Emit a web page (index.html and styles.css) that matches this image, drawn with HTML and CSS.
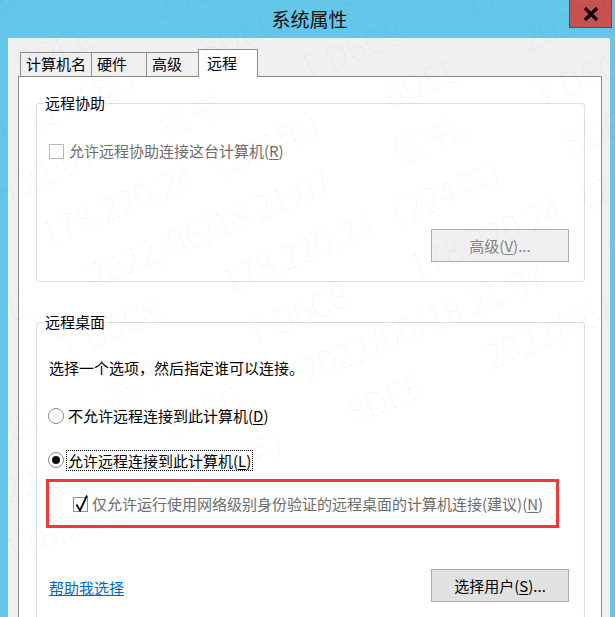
FILE: index.html
```html
<!DOCTYPE html>
<html lang="zh-CN">
<head>
<meta charset="utf-8">
<title>系统属性</title>
<link rel="stylesheet" href="styles.css">
</head>
<body>
<div class="window">
  <div class="titlebar">
    <span class="title">系统属性</span>
    <button class="close" aria-label="关闭">
      <svg width="16" height="14" viewBox="0 0 16 14"><path d="M2 1 L14 13 M14 1 L2 13" stroke="#000" stroke-width="3.2" fill="none"/></svg>
    </button>
  </div>
  <div class="frame">
    <div class="tabs">
      <div class="tab t1">计算机名</div>
      <div class="tab t2">硬件</div>
      <div class="tab t3">高级</div>
      <div class="tab active">远程</div>
    </div>
    <div class="panel">
      <fieldset class="group g1">
        <legend>远程协助</legend>
        <label class="check disabled"><span class="box"></span><span>允许远程协助连接这台计算机(<u>R</u>)</span></label>
        <div class="btnrow"><button class="btn" disabled>高级(<u>V</u>)...</button></div>
      </fieldset>
      <fieldset class="group g2">
        <legend>远程桌面</legend>
        <p class="intro">选择一个选项，然后指定谁可以连接。</p>
        <label class="radio r1"><span class="circle"></span><span>不允许远程连接到此计算机(<u>D</u>)</span></label>
        <label class="radio r2"><span class="circle on"></span><span class="focus">允许远程连接到此计算机(<u>L</u>)</span></label>
        <div class="highlight">
          <label class="check nla"><span class="box checked"><svg width="15" height="17" viewBox="0 0 15 17"><path d="M2.5 9.5 L6 15.5 L13 0.5" stroke="#000" stroke-width="1.8" fill="none"/></svg></span><span>仅允许运行使用网络级别身份验证的远程桌面的计算机连接(建议)(<u>N</u>)</span></label>
        </div>
        <div class="bottomrow">
          <a class="link" href="#">帮助我选择</a>
          <button class="btn enabled">选择用户(<u>S</u>)...</button>
        </div>
      </fieldset>
    </div>
  </div>
  <div class="watermark" aria-hidden="true">
    <div class="wm-inner">
      <p>2022/06/18 21:07　　信书。　　T D6C8　　178.220.24（224年）　　8DEE</p>
      <p>178.220.24（224年）　　8DEE　　2022/06/18 21:07　　信书。　　T D6C8</p>
      <p>T D6C8　　178.220.24（224年）　　8DEE　　2022/06/18 21:07　　信书。</p>
      <p>8DEE　　2022/06/18 21:07　　信书。　　T D6C8　　178.220.24（224年）</p>
      <p>信书。　　T D6C8　　178.220.24（224年）　　8DEE　　2022/06/18 21:07</p>
      <p>（224年）　　8DEE　　2022/06/18 21:07　　信书。　　T D6C8　　178.220.24</p>
      <p>21:07　　信书。　　T D6C8　　178.220.24（224年）　　8DEE　　2022/06/18</p>
      <p>2022/06/18 21:07　　信书。　　T D6C8　　178.220.24（224年）　　8DEE</p>
      <p>178.220.24（224年）　　8DEE　　2022/06/18 21:07　　信书。　　T D6C8</p>
      <p>T D6C8　　178.220.24（224年）　　8DEE　　2022/06/18 21:07　　信书。</p>
    </div>
  </div>
</div>
</body>
</html>
```

FILE: styles.css
```css
* { box-sizing: border-box; }

html, body {
  margin: 0;
  padding: 0;
  width: 615px;
  height: 617px;
  overflow: hidden;
}

body {
  font-family: "Noto Sans CJK SC", "Microsoft YaHei", "Noto Sans", sans-serif;
  font-size: 15px;
  line-height: 20px;
  color: #000;
}

.window {
  position: relative;
  width: 615px;
  height: 617px;
  background: #63c7e9;
  display: flex;
  flex-direction: column;
  overflow: hidden;
}

.titlebar {
  height: 38px;
  flex: none;
  display: flex;
  justify-content: center;
  align-items: center;
}

.title {
  font-size: 19px;
  line-height: 24px;
  color: #111;
  margin-left: 4px;
}

.close {
  position: absolute;
  top: 0;
  right: 3px;
  width: 43px;
  height: 28px;
  padding: 0;
  margin: 0;
  background: #c75050;
  border: 1px solid #8c3b3b;
  border-top: none;
  display: flex;
  align-items: center;
  justify-content: center;
}

.frame {
  flex: 1;
  margin: 0 5px 0 8px;
  background: #f0f0f0;
  padding: 11px 8px 0 10px;
  display: flex;
  flex-direction: column;
  min-height: 0;
}

.tabs {
  display: flex;
  align-items: flex-end;
  padding-left: 2px;
  position: relative;
  z-index: 2;
}

.tab {
  height: 24px;
  border: 1px solid #8d8d8d;
  border-bottom: none;
  background: #f0f0f0;
  line-height: 22px;
  padding-left: 5px;
  margin-right: -1px;
  white-space: nowrap;
}

.t1 { width: 72px; }
.t2 { width: 56px; }
.t3 { width: 53px; }

.tab.active {
  width: 60px;
  height: 28px;
  background: #fff;
  padding-left: 8px;
  padding-top: 2px;
  margin-bottom: -1px;
  margin-right: 0;
}

.panel {
  flex: 1;
  background: #fff;
  border: 1px solid #898989;
  border-bottom: none;
  padding: 16px 16px 0 17px;
  position: relative;
  z-index: 1;
}

.group {
  margin: 0;
  border: 1px solid #d5dfe5;
  border-radius: 3px;
  padding: 0 15px 0 12px;
  min-width: 0;
}

.group legend {
  padding: 0 2px;
  margin-left: -6px;
  line-height: 20px;
}

.g1 {
  height: 189px;
  padding-top: 28px;
  padding-bottom: 19px;
}

.g2 {
  margin-top: 30px;
  padding-top: 26px;
  padding-bottom: 30px;
}

.check, .radio {
  display: flex;
  align-items: center;
  height: 20px;
  white-space: nowrap;
}

.box {
  width: 15px;
  height: 15px;
  border: 1px solid #b9b9b9;
  background: #fff;
  margin-right: 5px;
  flex: none;
  position: relative;
}

.disabled { color: #6d6d6d; }

.btnrow {
  display: flex;
  justify-content: flex-end;
  margin-top: 68px;
}

.btn {
  width: 138px;
  height: 33px;
  border: 1px solid #adadad;
  background: #f0f0f0;
  font-family: inherit;
  font-size: 15px;
  line-height: 20px;
  color: #838383;
  padding: 0;
  margin: 0;
}

.btn.enabled {
  background: #e1e1e1;
  color: #000;
}

.intro {
  margin: 0;
  height: 20px;
}

.radio { margin-top: 28px; }
.r2 { margin-top: 24px; }

.circle {
  width: 16px;
  height: 16px;
  border-radius: 50%;
  border: 1px solid #8a8a8a;
  background: #fff;
  margin-right: 4px;
  margin-left: -1px;
  flex: none;
  display: flex;
  align-items: center;
  justify-content: center;
}

.circle.on::after {
  content: "";
  width: 8px;
  height: 8px;
  border-radius: 50%;
  background: #111;
}

.focus {
  outline: 1px dotted #000;
  outline-offset: 0;
  padding: 0 1px;
  margin-left: -1px;
  line-height: 19px;
}

.highlight {
  margin-top: 9px;
  margin-left: -3px;
  width: 513px;
  height: 49px;
  border: 3px solid #ef3a3a;
  padding: 12px 0 0 24px;
}

.nla { color: #6d6d6d; }

.nla .box {
  border-color: #8f8f8f;
  margin-right: 4px;
}

.nla .box svg {
  position: absolute;
  left: 0;
  top: -3px;
}

.bottomrow {
  margin-top: 41px;
  display: flex;
  justify-content: space-between;
  align-items: flex-end;
}

.link {
  color: #0066cc;
  text-decoration: underline;
  margin-bottom: 4px;
  line-height: 20px;
}

u { text-underline-offset: 2px; }

.watermark {
  position: absolute;
  inset: 0;
  pointer-events: none;
  overflow: hidden;
  z-index: 5;
}

.wm-inner {
  position: absolute;
  left: -300px;
  top: -140px;
  width: 1300px;
  transform: rotate(-22deg);
  transform-origin: 50% 50%;
  color: rgba(0, 0, 0, 0.03);
  font-size: 34px;
  font-weight: 300;
  line-height: 56px;
  white-space: nowrap;
}

.wm-inner p { margin: 0; }
```
